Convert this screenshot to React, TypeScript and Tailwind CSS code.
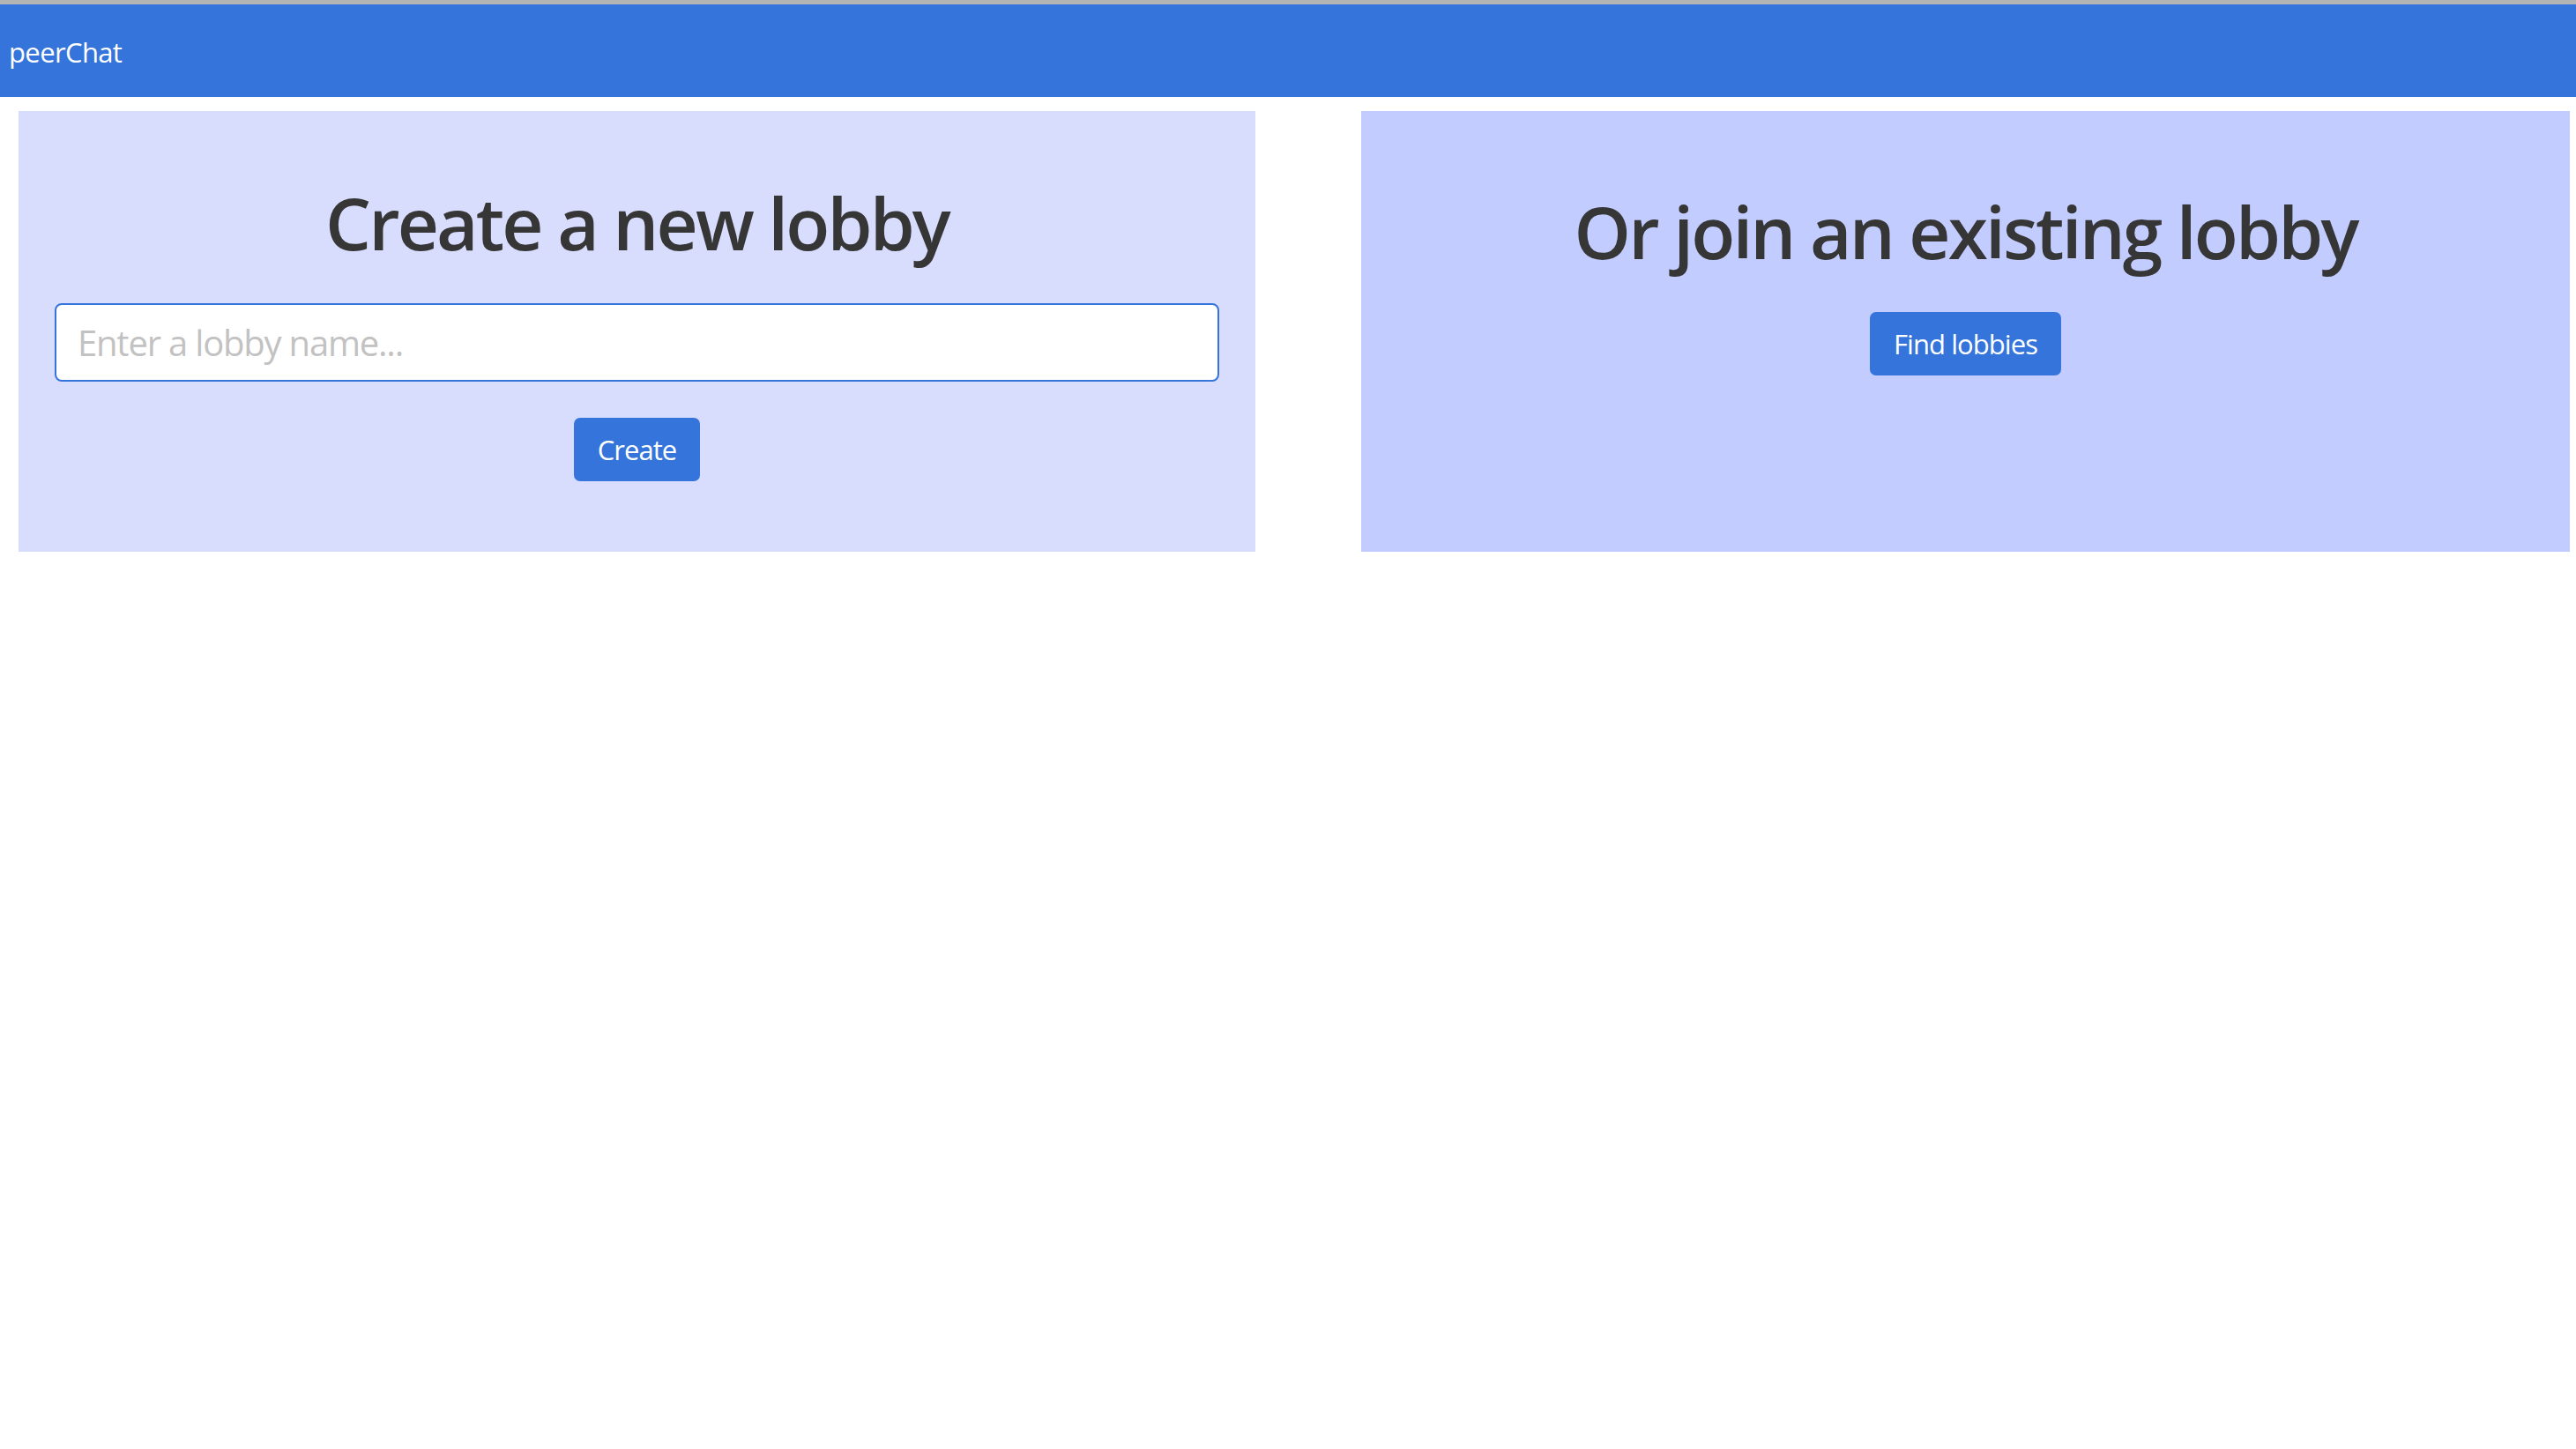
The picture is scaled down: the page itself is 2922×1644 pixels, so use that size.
export default function App() {
  return (
    <div className="min-h-screen bg-white font-['Open_Sans',sans-serif]">
      <div className="h-[5px] bg-[#b4b4b4]" />
      <nav className="flex h-[105px] items-center bg-[#3474db] px-[10px] pt-[3px]">
        <span className="text-[31px] tracking-[-0.02em] text-white">peerChat</span>
      </nav>
      <div className="mt-[16px] ml-[21px] flex gap-[120px]">
        <section className="w-[1403px] bg-[#d8ddfe] px-[41px] pt-[76px] pb-[80px] text-center">
          <h1 className="text-[82px] leading-[101px] font-semibold tracking-[-0.035em] text-[#363636]">Create a new lobby</h1>
          <input
            type="text"
            placeholder="Enter a lobby name..."
            className="mt-[41px] block h-[89px] w-full rounded-[8px] border-2 border-[#3474db] bg-white px-[24px] text-[40px] tracking-[-0.03em] text-[#363636] outline-none placeholder:text-[#c2c2c2]"
          />
          <button className="mt-[41px] h-[72px] rounded-[7px] bg-[#3474db] px-[27px] text-[31px] tracking-[-0.03em] text-white">
            Create
          </button>
        </section>
        <section className="flex w-[1371px] flex-col items-center bg-[#c3ccfe] pt-[86px] text-center">
          <h1 className="text-[82px] leading-[101px] font-semibold tracking-[-0.035em] text-[#363636]">Or join an existing lobby</h1>
          <button className="mt-[41px] h-[72px] rounded-[7px] bg-[#3474db] px-[27px] text-[31px] tracking-[-0.03em] text-white">
            Find lobbies
          </button>
        </section>
      </div>
    </div>
  );
}
